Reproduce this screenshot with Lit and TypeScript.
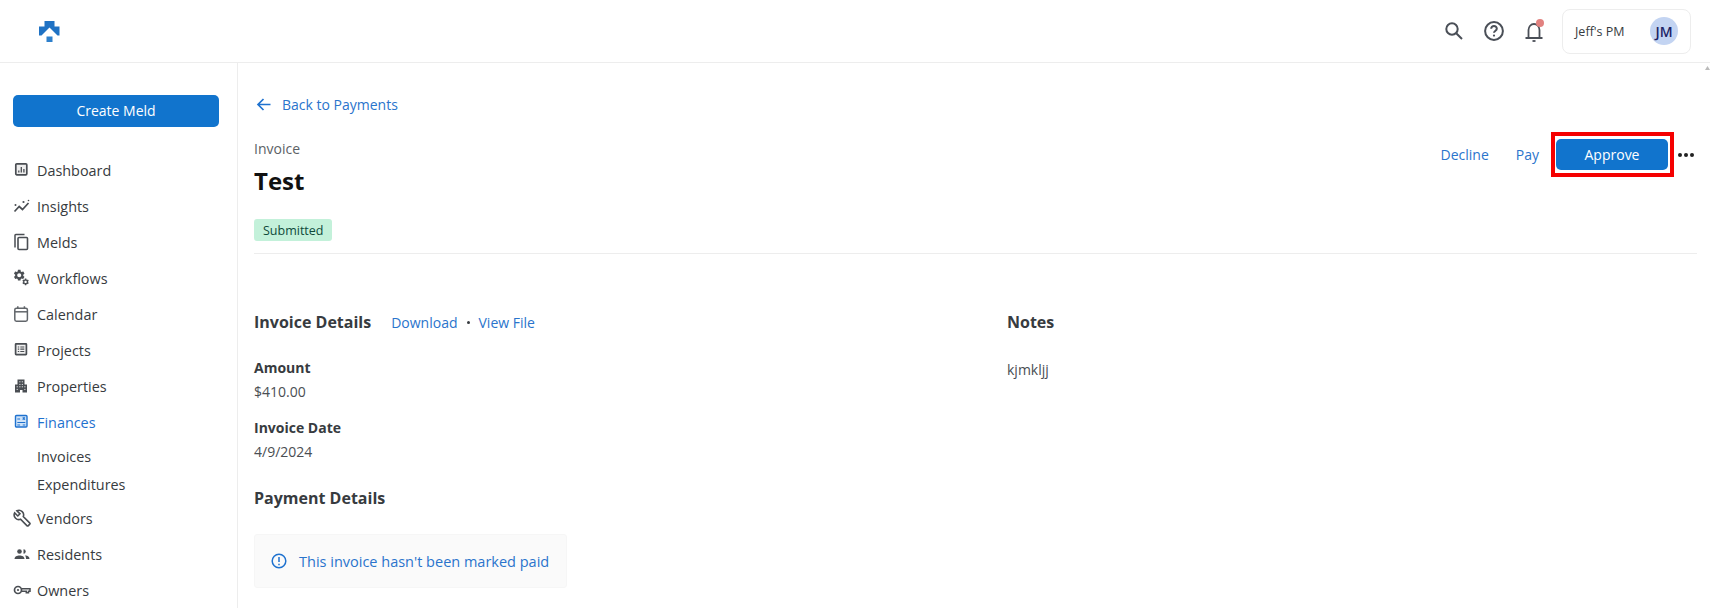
import { LitElement, html, css, svg } from "lit";
import { customElement } from "lit/decorators.js";

const GEAR = "M19.14 12.94c.04-.3.06-.61.06-.94 0-.32-.02-.64-.07-.94l2.03-1.58c.18-.14.23-.41.12-.61l-1.92-3.32c-.12-.22-.37-.29-.59-.22l-2.39.96c-.5-.38-1.03-.7-1.62-.94l-.36-2.54c-.04-.24-.24-.41-.48-.41h-3.84c-.24 0-.43.17-.47.41l-.36 2.54c-.59.24-1.13.57-1.62.94l-2.39-.96c-.22-.08-.47 0-.59.22L2.74 8.87c-.12.21-.08.47.12.61l2.03 1.58c-.05.3-.09.63-.09.94s.02.64.07.94l-2.03 1.58c-.18.14-.23.41-.12.61l1.92 3.32c.12.22.37.29.59.22l2.39-.96c.5.38 1.03.7 1.62.94l.36 2.54c.05.24.24.41.48.41h3.84c.24 0 .44-.17.47-.41l.36-2.54c.59-.24 1.13-.56 1.62-.94l2.39.96c.22.08.47 0 .59-.22l1.92-3.32c.12-.22.07-.47-.12-.61l-2.01-1.58zM12 15.6c-1.98 0-3.6-1.62-3.6-3.6s1.62-3.6 3.6-3.6 3.6 1.62 3.6 3.6-1.62 3.6-3.6 3.6z";

const I: Record<string, any> = {
  dashboard: svg`<rect x="2.800" y="2.800" width="11" height="11" rx="1" fill="#eee" stroke-width="1.700"/><path d="M5.800 11.500V9.500M8.300 11.500V6M10.900 11.500V8" fill="none" stroke-width="1.300"/>`,
  insights: svg`<path d="M1.500 14.500l4.700-5 3.300 3 6-6.500" fill="none" stroke-width="1.700"/><circle cx="2.500" cy="8" r="1" stroke="none"/><circle cx="10.500" cy="5" r="1.100" stroke="none"/><circle cx="15.500" cy="3.500" r=".8" stroke="none"/>`,
  melds: svg`<path d="M2 14.500V2.300C2 1.800 2.400 1.500 2.800 1.500H11.500" fill="none" stroke-width="1.500"/><rect x="5" y="4.500" width="9.500" height="12" rx="1" fill="none" stroke-width="1.600"/>`,
  workflows: svg`<path transform="translate(-.5 -.5) scale(.56)" d="${GEAR}" stroke="none"/><path transform="translate(8.500 8.800) scale(.34)" d="${GEAR}" stroke="none"/>`,
  calendar: svg`<rect x="1.800" y="3.200" width="12.600" height="13" rx="1.600" fill="none" stroke="#62666b" stroke-width="1.500"/><path d="M1.800 6.800h12.600" stroke="#62666b" stroke-width="1.500"/><path d="M4.800 1.200v2.500M11.400 1.200v2.500" stroke="#62666b" stroke-width="1.500"/>`,
  projects: svg`<rect x="2.600" y="2.800" width="10.800" height="10.800" rx=".5" fill="#f1f1f1" stroke-width="1.700"/><path d="M4.800 6h1.400M4.800 8.200h1.400M4.800 10.500h1.400M7.300 6h4M7.300 8.200h4M7.300 10.500h4" stroke-width="1.200"/>`,
  properties: svg`<path d="M2 15.500V7.500h2.500V2.500h7V7.500h2.500v8H9.500V13H7v2.500z" stroke="none"/><path d="M6.400 4.800h1M8.800 4.800h1M6.400 7.400h1M8.800 7.400h1M3.700 9.800h1M6.400 9.800h1M8.800 9.800h1M11.400 9.800h1M3.700 12.400h1M11.400 12.400h1" stroke="#fff" stroke-width="1"/>`,
  finances: svg`<rect x="2.500" y="2.500" width="11.500" height="11.500" rx="1" fill="#cfe3f8" stroke-width="1.400"/><path d="M4.300 6h2.800M9.700 4.500l2.200 2.200M11.900 4.500L9.700 6.700M4.300 9.500h8M4.300 12h2.800M9.700 12h2.600" stroke-width="1.200"/>`,
  vendors: svg`<path transform="translate(.5 .5) scale(.72)" d="M22.700 19l-9.100-9.100c.9-2.300.4-5-1.500-6.900-2-2-5-2.400-7.400-1.300L9 6 6 9 1.600 4.700C.4 7.100.9 10.100 2.900 12.100c1.900 1.900 4.600 2.400 6.900 1.500l9.100 9.100c.4.400 1 .4 1.400 0l2.300-2.300c.5-.4.5-1.100.1-1.400z" fill="none" stroke-width="2.200"/>`,
  residents: svg`<circle cx="6.500" cy="6.500" r="2.300" stroke="none"/><path d="M1.500 14c0-2.400 2.500-3.500 5-3.500s5 1.100 5 3.500z" stroke="none"/><path d="M10.500 4.300a2.200 2.200 0 010 4.400z" stroke="none"/><path d="M12.800 10.500c2 .3 3.700 1.300 3.700 3.500h-3.500c0-1.500-.2-2.500-1-3.500z" stroke="none"/>`,
  owners: svg`<circle cx="5" cy="9" r="3.500" fill="none" stroke-width="1.700"/><circle cx="5" cy="9" r="1.100" stroke="none"/><path d="M8.500 7.800h8.500v2.400h-1.500v1.600h-2.200v-1.600H8.500" fill="none" stroke-width="1.500"/>`,
};

const NAV_TOP = [
  ["Dashboard", "dashboard"],
  ["Insights", "insights"],
  ["Melds", "melds"],
  ["Workflows", "workflows"],
  ["Calendar", "calendar"],
  ["Projects", "projects"],
  ["Properties", "properties"],
];
const NAV_BOTTOM = [
  ["Vendors", "vendors"],
  ["Residents", "residents"],
  ["Owners", "owners"],
];

@customElement("app-root")
export class AppRoot extends LitElement {
  static styles = css`
    :host {
      display: flex;
      flex-direction: column;
      position: relative;
      height: 608px;
      overflow: hidden;
      background: #fff;
      font-family: "Open Sans", sans-serif;
      font-size: 14px;
      color: #373b40;
    }
    .top {
      flex: none;
      height: 62px;
      border-bottom: 1px solid #ededed;
      display: flex;
      align-items: center;
      padding: 0 19px 0 39px;
    }
    .logo { width: 21px; height: 21px; }
    .spacer { flex: 1; }
    .top-ic { display: block; }
    .search { margin-right: 21px; }
    .help { margin-right: 21px; }
    .bell-wrap { position: relative; margin-right: 19px; width: 18px; height: 20px; margin-top: 2px; }
    .dot {
      position: absolute; top: -3px; right: -1px;
      width: 8px; height: 8px; border-radius: 50%;
      background: #e28280;
    }
    .acct {
      width: 129px; height: 45px; box-sizing: border-box;
      border: 1px solid #ededed; border-radius: 8px;
      display: flex; align-items: center; justify-content: space-between;
      padding: 0 12px;
      font-size: 12.500px;
    }
    .avatar {
      width: 28px; height: 28px; border-radius: 50%;
      background: #c3d4f2; color: #1c2366;
      display: flex; align-items: center; justify-content: center;
      font-size: 14px; font-weight: 600;
    }
    .body { flex: 1; display: flex; min-height: 0; }
    .side {
      flex: none; width: 238px; box-sizing: border-box;
      border-right: 1px solid #ededed;
      padding: 32px 18px 0 13px;
    }
    .create {
      height: 32px; border-radius: 5px;
      background: #1174cd; color: #fff;
      display: flex; align-items: center; justify-content: center;
      padding-bottom: 1px; box-sizing: border-box;
      margin-bottom: 25px;
    }
    .nav {
      height: 36px; display: flex; align-items: center; gap: 6px;
      color: #373b40; font-size: 14.400px;
    }
    .nav svg { width: 18px; height: 18px; flex: none; fill: #4a4e53; stroke: #4a4e53; }
    .nav.active { color: #1f72cf; }
    .nav.active svg { fill: #1f72cf; stroke: #1f72cf; }
    .subs { padding-left: 24px; margin-top: 2px; margin-bottom: 2px; font-size: 14.400px; }
    .sub { height: 28px; display: flex; align-items: center; }
    .main { flex: 1; min-width: 0; padding: 28px 13px 0 16px; }
    .back {
      display: flex; align-items: center; gap: 11px;
      height: 26px; color: #2a74cc;
    }
    .back svg { width: 17px; height: 17px; }
    .head {
      display: flex; justify-content: space-between;
      margin-top: 15px;
      border-bottom: 1px solid #ededed;
      padding-bottom: 12px;
    }
    .crumb { font-size: 14px; color: #5c6166; line-height: 19px; margin-top: 7px; }
    h1 { margin: 8px 0 0; font-size: 24px; font-weight: 700; color: #111; line-height: 30px; }
    .badge {
      width: fit-content; margin-top: 23px;
      background: #c3f1da; color: #0f4a3a;
      font-size: 12.500px; line-height: 21px; padding: 1px 9px 0;
      border-radius: 3px;
    }
    .actions { display: flex; align-items: flex-start; color: #2a74cc; padding-right: 3px; }
    .act { height: 31px; margin-top: 7px; display: flex; align-items: center; }
    .decline { margin-right: 27px; }
    .pay { margin-right: 12px; }
    .highlight {
      border: 4px solid #f50000;
      padding: 3px 2px 3px 1px;
    }
    .approve {
      width: 112px; height: 31px; border-radius: 5px;
      background: #1174cd; color: #fff;
      display: flex; align-items: center; justify-content: center;
    }
    .more { margin: 7px 0 0 4px; height: 31px; display: flex; align-items: center; gap: 2px; }
    .more i { width: 4px; height: 4px; border-radius: 50%; background: #222; display: block; }
    .cols { display: flex; margin-top: 57px; }
    .left { width: 753px; flex: none; }
    h2 { margin: 0; font-size: 16px; font-weight: 700; line-height: 22px; color: #373b40; }
    .dh { display: flex; align-items: center; }
    .links { display: flex; align-items: center; color: #2a74cc; margin-left: 20px; }
    .sep { width: 3px; height: 3px; border-radius: 50%; background: #373b40; margin: 0 9px; }
    .lbl { font-weight: 700; line-height: 20px; margin-top: 16px; }
    .lbl.first { margin-top: 25px; }
    .val { line-height: 20px; margin-top: 4px; color: #4a4e53; }
    .pd { margin-top: 25px; }
    .notice {
      width: 313px; height: 54px; box-sizing: border-box; margin-top: 25px;
      background: #fafafa; border: 1px solid #f6f6f6; border-radius: 3px;
      display: flex; align-items: center; gap: 12px; padding-left: 16px;
      color: #2a74cc; font-size: 14.500px; font-weight: 500;
    }
    .notice svg { width: 16px; height: 16px; }
    .note { margin-top: 27px; line-height: 20px; color: #4a4e53; }
    .scroll-arrow { position: absolute; top: 66px; right: 0; }
  `;

  render() {
    const row = (n: string[]) =>
      html`<div class="nav ${n[0] === "Finances" ? "active" : ""}"><svg viewBox="0 0 18 18">${I[n[1]]}</svg>${n[0]}</div>`;
    return html`
      <div class="top">
        <svg class="logo" viewBox="0 0 21 21">
          <path fill="#1f72c4" d="M5.500 0H15.500V5.500H20.500V14.500H18.500L10.500 6.500 2.500 14.500H0V5.500H5.500Z"/>
          <rect x="7.500" y="15.500" width="6" height="5.500" fill="#2e80cc"/>
        </svg>
        <div class="spacer"></div>
        <svg class="top-ic search" width="18" height="18" viewBox="0 0 18 18" fill="none" stroke="#4a4f57" stroke-width="2"><circle cx="7" cy="7" r="5.700"/><path d="M11.200 11.200L17 17"/></svg>
        <svg class="top-ic help" width="20" height="20" viewBox="0 0 20 20" fill="none" stroke="#4a4f57" stroke-width="2"><circle cx="10" cy="10" r="8.900"/><path d="M7.200 7.800a2.800 2.800 0 115.600 0c0 1.900-2.800 2-2.800 4"/><circle cx="10" cy="14.600" r="1.100" fill="#4a4f57" stroke="none"/></svg>
        <div class="bell-wrap">
          <svg class="top-ic" width="18" height="20" viewBox="0 0 18 20" fill="none" stroke="#4a4f57" stroke-width="1.800"><path d="M3.500 15.500V8a5.500 6 0 0111 0v7.500"/><path d="M.5 16h17" stroke-width="2"/><path d="M7.500 19h3" stroke-width="1.800"/></svg>
          <span class="dot"></span>
        </div>
        <div class="acct"><span>Jeff's PM</span><span class="avatar">JM</span></div>
      </div>
      <div class="body">
        <aside class="side">
          <div class="create">Create Meld</div>
          ${NAV_TOP.map(row)}
          ${row(["Finances", "finances"])}
          <div class="subs">
            <div class="sub">Invoices</div>
            <div class="sub">Expenditures</div>
          </div>
          ${NAV_BOTTOM.map(row)}
        </aside>
        <main class="main">
          <div class="back">
            <svg viewBox="0 0 17 17" fill="none" stroke="#1f72cf" stroke-width="1.700"><path d="M16.500 8.500H4M9.500 3L4 8.500 9.500 14"/></svg>
            Back to Payments
          </div>
          <div class="head">
            <div>
              <div class="crumb">Invoice</div>
              <h1>Test</h1>
              <div class="badge">Submitted</div>
            </div>
            <div class="actions">
              <div class="act decline">Decline</div>
              <div class="act pay">Pay</div>
              <div class="highlight"><div class="approve">Approve</div></div>
              <div class="more"><i></i><i></i><i></i></div>
            </div>
          </div>
          <div class="cols">
            <div class="left">
              <div class="dh">
                <h2>Invoice Details</h2>
                <div class="links">Download<span class="sep"></span>View File</div>
              </div>
              <div class="lbl first">Amount</div>
              <div class="val">$410.00</div>
              <div class="lbl">Invoice Date</div>
              <div class="val">4/9/2024</div>
              <h2 class="pd">Payment Details</h2>
              <div class="notice">
                <svg viewBox="0 0 16 16" fill="none" stroke="#1f72cf" stroke-width="1.500"><circle cx="8" cy="8" r="6.800"/><path d="M8 4v5M8 10.800v1.500"/></svg>
                This invoice hasn't been marked paid
              </div>
            </div>
            <div>
              <h2>Notes</h2>
              <div class="note">kjmkljj</div>
            </div>
          </div>
        </main>
      </div>
      <svg class="scroll-arrow" width="5" height="4" viewBox="0 0 5 4" fill="#bbb"><path d="M2.500 0L5 4H0z"/></svg>
    `;
  }
}
